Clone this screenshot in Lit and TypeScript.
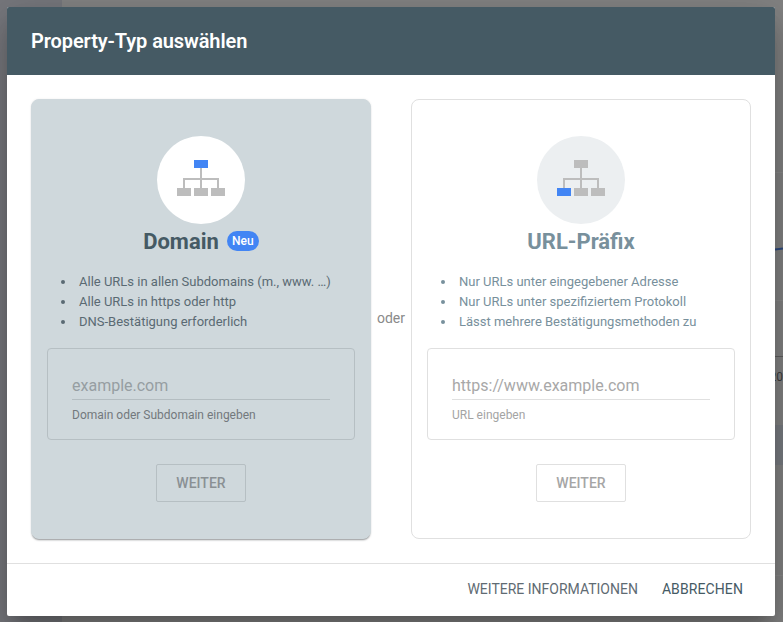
import { LitElement, html, css, svg } from "lit";
import { customElement } from "lit/decorators.js";

const GREY = "#bdbdbd";
const BLUE = "#4285f4";

const tree = (active: "top" | "left") => html`<svg class="tree" width="48" height="36" viewBox="0 0 48 36" aria-hidden="true">
  ${svg`<path fill="none" stroke="${GREY}" stroke-width="2" d="M24 8V28M7 28V19H41V28"/>`}
  ${svg`<rect x="17" y="0" width="14" height="8" fill="${active === "top" ? BLUE : GREY}"/>`}
  ${svg`<rect x="0" y="28" width="14" height="8" fill="${active === "left" ? BLUE : GREY}"/>`}
  ${svg`<rect x="17" y="28" width="14" height="8" fill="${GREY}"/>`}
  ${svg`<rect x="34" y="28" width="14" height="8" fill="${GREY}"/>`}
</svg>`;

@customElement("app-root")
export class AppRoot extends LitElement {
  static styles = css`
    :host {
      display: block;
      width: 783px;
      height: 622px;
      font-family: Roboto, "Liberation Sans", sans-serif;
    }
    .backdrop {
      position: relative;
      width: 783px;
      height: 622px;
      box-sizing: border-box;
      padding: 7px 8px 6px 7px;
      background: #838383;
      overflow: hidden;
    }
    .ghost-side { position: absolute; left: 0; top: 0; width: 62px; height: 622px; background: #77787d; }
    .ghost-band { position: absolute; left: 775px; width: 8px; height: 40px; top: 425px; background: #797c82; }
    .ghost-line { position: absolute; left: 775px; width: 8px; height: 1px; background: #5f5f5f; top: 356px; }
    .ghost-faint { position: absolute; left: 775px; width: 8px; height: 1px; background: #8a8a8a; }
    .ghost-faint.a { top: 172px; }
    .ghost-faint.b { top: 300px; }
    .ghost-faint.c { top: 575px; }
    .ghost-curve { position: absolute; left: 775px; width: 8px; height: 2px; background: #2d4a80; top: 248px; transform: rotate(-8deg); }
    .ghost-text { position: absolute; left: 775px; width: 8px; overflow: hidden; top: 370px; font-size: 12px; line-height: 14px; color: #3d3d3d; direction: rtl; }
    .dialog {
      position: relative;
      height: 609px;
      display: flex;
      flex-direction: column;
      background: #fff;
      border-radius: 2px;
      box-shadow: 0 11px 15px -7px rgba(0, 0, 0, 0.2), 0 24px 38px 3px rgba(0, 0, 0, 0.14), 0 9px 46px 8px rgba(0, 0, 0, 0.12);
    }
    header {
      height: 68px;
      flex: none;
      box-sizing: border-box;
      padding: 0 24px;
      display: flex;
      align-items: center;
      background: #455a64;
      color: #fff;
      font-size: 20px;
      font-weight: 600;
      letter-spacing: -0.1px;
      border-radius: 2px 2px 0 0;
    }
    .content {
      flex: 1;
      display: flex;
      align-items: flex-start;
      padding: 24px;
    }
    .card {
      width: 340px;
      height: 440px;
      flex: none;
      box-sizing: border-box;
      border: 1px solid #e0e0e0;
      border-radius: 8px;
      padding: 36px 15px 0;
      display: flex;
      flex-direction: column;
      align-items: center;
      color: #78909c;
      background: #fff;
    }
    .card.selected {
      background: #cfd8dc;
      border-color: #cfd8dc;
      box-shadow: 0 2px 2px -1px rgba(60, 64, 67, 0.55), 0 0 2px rgba(60, 64, 67, 0.1);
    }
    .or {
      width: 40px;
      flex: none;
      height: 440px;
      display: flex;
      align-items: center;
      justify-content: center;
      font-size: 14px;
      color: #8a8a8a;
    }
    .or span { padding-bottom: 2px; }
    .circle {
      width: 88px;
      height: 88px;
      flex: none;
      box-sizing: border-box;
      padding-bottom: 4px;
      border-radius: 50%;
      background: #eceff1;
      display: flex;
      align-items: center;
      justify-content: center;
    }
    .selected .circle { background: #fff; }
    .tree { display: block; }
    .title {
      display: flex;
      align-items: center;
      gap: 8px;
      height: 34px;
      font-size: 22px;
      font-weight: 700;
      color: #78909c;
    }
    .selected .title { color: #455a64; }
    .badge {
      display: inline-flex;
      align-items: center;
      justify-content: center;
      width: 32px;
      height: 20px;
      border-radius: 10px;
      background: #4285f4;
      color: #fff;
      font-size: 12px;
      font-weight: 500;
    }
    ul {
      align-self: stretch;
      list-style: none;
      margin: 14px 0 0;
      padding: 0 0 0 32px;
      font-size: 13px;
      line-height: 20px;
      height: 60px;
    }
    li { position: relative; }
    li::before {
      content: "";
      position: absolute;
      left: -18px;
      top: 8px;
      width: 4px;
      height: 4px;
      border-radius: 50%;
      background: currentColor;
    }
    .selected ul { color: #5a6a73; }
    .field {
      align-self: stretch;
      height: 92px;
      box-sizing: border-box;
      margin-top: 16px;
      border: 1px solid #e0e0e0;
      border-radius: 4px;
      padding: 24px 24px 0;
    }
    .selected .field { border-color: #b6bfc3; }
    .placeholder {
      height: 27px;
      box-sizing: border-box;
      font-size: 16px;
      line-height: 26px;
      color: #a8a8a8;
      border-bottom: 1px solid #e0e0e0;
    }
    .selected .placeholder { color: #969ea2; border-bottom-color: #b4bdc1; }
    .helper {
      margin-top: 8px;
      font-size: 12px;
      line-height: 14px;
      color: #a4a4a4;
    }
    .selected .helper { color: #73797d; }
    .next {
      width: 90px;
      height: 38px;
      margin-top: 24px;
      box-sizing: border-box;
      border: 1px solid #e0e0e0;
      border-radius: 2px;
      background: transparent;
      display: flex;
      align-items: center;
      justify-content: center;
      padding: 0 0 1px;
      font: 500 14px Roboto, "Liberation Sans", sans-serif;
      color: #a6a6a6;
    }
    .selected .next { border-color: #b6bfc3; color: #8a9094; }
    footer {
      height: 53px;
      flex: none;
      box-sizing: border-box;
      border-top: 1px solid #e0e0e0;
      display: flex;
      align-items: center;
      justify-content: flex-end;
      gap: 24px;
      padding: 0 32px 2px 0;
      font-size: 14px;
    }
    footer .more { color: #5f6b73; }
    footer .cancel { color: #455a64; letter-spacing: 0.1px; }
  `;

  private card(o: {
    selected?: boolean; active: "top" | "left"; name: string; badge?: string;
    items: string[]; placeholder: string; helper: string;
  }) {
    return html`<section class="card ${o.selected ? "selected" : ""}">
      <div class="circle">${tree(o.active)}</div>
      <div class="title">${o.name}${o.badge ? html`<span class="badge">${o.badge}</span>` : ""}</div>
      <ul>${o.items.map((t) => html`<li>${t}</li>`)}</ul>
      <div class="field">
        <div class="placeholder">${o.placeholder}</div>
        <div class="helper">${o.helper}</div>
      </div>
      <button class="next">WEITER</button>
    </section>`;
  }

  render() {
    return html`<div class="backdrop">
      <div class="ghost-side"></div>
      <div class="ghost-band"></div>
      <div class="ghost-curve"></div>
      <div class="ghost-faint a"></div>
      <div class="ghost-faint b"></div>
      <div class="ghost-faint c"></div>
      <div class="ghost-line"></div>
      <div class="ghost-text">20</div>
      <div class="dialog">
        <header>Property-Typ auswählen</header>
        <div class="content">
          ${this.card({
            selected: true, active: "top", name: "Domain", badge: "Neu",
            items: ["Alle URLs in allen Subdomains (m., www. …)", "Alle URLs in https oder http", "DNS-Bestätigung erforderlich"],
            placeholder: "example.com", helper: "Domain oder Subdomain eingeben",
          })}
          <div class="or"><span>oder</span></div>
          ${this.card({
            active: "left", name: "URL-Präfix",
            items: ["Nur URLs unter eingegebener Adresse", "Nur URLs unter spezifiziertem Protokoll", "Lässt mehrere Bestätigungsmethoden zu"],
            placeholder: "https://www.example.com", helper: "URL eingeben",
          })}
        </div>
        <footer><span class="more">WEITERE INFORMATIONEN</span><span class="cancel">ABBRECHEN</span></footer>
      </div>
    </div>`;
  }
}
